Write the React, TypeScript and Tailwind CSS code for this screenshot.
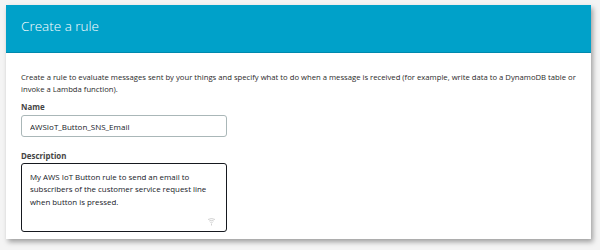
import React from 'react';

export default function App() {
  return (
    <div
      className="w-[600px] h-[250px] bg-[#f4f4f4] pt-[5px] pl-[6px]"
      style={{ fontFamily: '"Open Sans", "Noto Sans", sans-serif' }}
    >
      <div className="w-[585px] h-[234px] bg-white shadow-[2px_3px_5px_rgba(0,0,0,0.35)] flex flex-col">
        <div className="h-[48px] bg-[#00a1c9] border-b border-[#0089ad] flex items-center pl-[15px] pb-[4px]">
          <h1 className="text-[13.5px] font-light text-white">Create a rule</h1>
        </div>
        <div className="pl-[15px] pr-[8px] pt-[18px]">
          <p className="text-[7.7px] leading-[12px] text-[#2a2a2a]">
            Create a rule to evaluate messages sent by your things and specify what to do when a message is received (for example, write data to a DynamoDB table or invoke a Lambda function).
          </p>
          <label className="block mt-[6px] text-[7.9px] leading-[12px] font-bold text-[#444]">Name</label>
          <input
            readOnly
            value="AWSIoT_Button_SNS_Email"
            className="mt-[2px] block w-[206px] h-[22px] px-[8px] rounded-[3px] border border-[#aab7b8] text-[8px] text-[#16191f] outline-none"
          />
          <label className="block mt-[13px] text-[7.9px] leading-[12px] font-bold text-[#444]">Description</label>
          <div className="relative mt-[1px] w-[206px] h-[69px] rounded-[3px] border border-[#16191f] px-[8px] pt-[7px]">
            <p className="text-[7.9px] leading-[12.3px] text-[#16191f]">
              My AWS IoT Button rule to send an email to subscribers of the customer service request line when button is pressed.
            </p>
            <svg className="absolute right-[10px] bottom-[5px]" width="9" height="9" viewBox="0 0 9 9" fill="none" stroke="#c5c5c5" strokeWidth="0.8">
              <path d="M1 2.5 Q4.5 0.5 8 2.5" />
              <path d="M2.2 4 Q4.5 2.7 6.8 4" />
              <path d="M3.4 5.5 Q4.5 4.9 5.6 5.5" />
              <path d="M4.5 6.5 L4.5 8.5" />
            </svg>
          </div>
        </div>
      </div>
    </div>
  );
}
